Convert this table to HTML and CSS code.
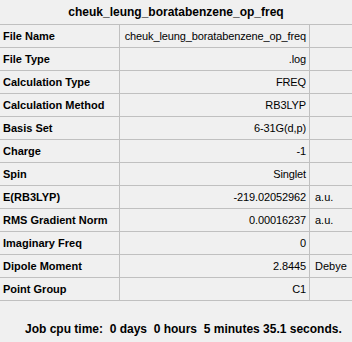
FILE: index.html
```html
<!DOCTYPE html>
<html>
<head>
<meta charset="utf-8">
<link rel="stylesheet" href="styles.css">
</head>
<body>
<div class="panel">
  <div class="title">cheuk_leung_boratabenzene_op_freq</div>
  <div class="grid">
    <div class="row"><div class="label">File Name</div><div class="value">cheuk_leung_boratabenzene_op_freq</div><div class="unit"></div></div>
    <div class="row"><div class="label">File Type</div><div class="value">.log</div><div class="unit"></div></div>
    <div class="row"><div class="label">Calculation Type</div><div class="value">FREQ</div><div class="unit"></div></div>
    <div class="row"><div class="label">Calculation Method</div><div class="value">RB3LYP</div><div class="unit"></div></div>
    <div class="row"><div class="label">Basis Set</div><div class="value">6-31G(d,p)</div><div class="unit"></div></div>
    <div class="row"><div class="label">Charge</div><div class="value">-1</div><div class="unit"></div></div>
    <div class="row"><div class="label">Spin</div><div class="value">Singlet</div><div class="unit"></div></div>
    <div class="row"><div class="label">E(RB3LYP)</div><div class="value">-219.02052962</div><div class="unit">a.u.</div></div>
    <div class="row"><div class="label">RMS Gradient Norm</div><div class="value">0.00016237</div><div class="unit">a.u.</div></div>
    <div class="row"><div class="label">Imaginary Freq</div><div class="value">0</div><div class="unit"></div></div>
    <div class="row"><div class="label">Dipole Moment</div><div class="value">2.8445</div><div class="unit">Debye</div></div>
    <div class="row"><div class="label">Point Group</div><div class="value">C1</div><div class="unit"></div></div>
  </div>
  <div class="footer">Job cpu time:&nbsp; 0 days&nbsp; 0 hours&nbsp; 5 minutes 35.1 seconds.</div>
</div>
</body>
</html>
```
FILE: styles.css
```css
html, body {
  margin: 0;
  padding: 0;
  background: #f0f0f0;
}
body {
  width: 352px;
  height: 342px;
  overflow: hidden;
  font-family: "Liberation Sans", Arial, sans-serif;
  font-size: 11px;
  color: #000;
}
.title {
  height: 24px;
  line-height: 24px;
  text-align: center;
  font-weight: bold;
  font-size: 12px;
}
.grid {
  border-top: 1px solid #c0c0c0;
}
.row {
  display: grid;
  grid-template-columns: 120px 190px 1fr;
  height: 22px;
  line-height: 22px;
  border-bottom: 1px solid #c0c0c0;
}
.label {
  font-weight: bold;
  padding-left: 3px;
  border-right: 1px solid #c0c0c0;
  white-space: nowrap;
}
.value {
  text-align: right;
  padding-right: 3px;
  border-right: 1px solid #c0c0c0;
  white-space: nowrap;
  letter-spacing: -0.12px;
}
.unit {
  padding-left: 5px;
  white-space: nowrap;
}
.footer {
  font-weight: bold;
  font-size: 12px;
  padding-left: 25px;
  margin-top: 20px;
  line-height: 16px;
  white-space: nowrap;
}
```
